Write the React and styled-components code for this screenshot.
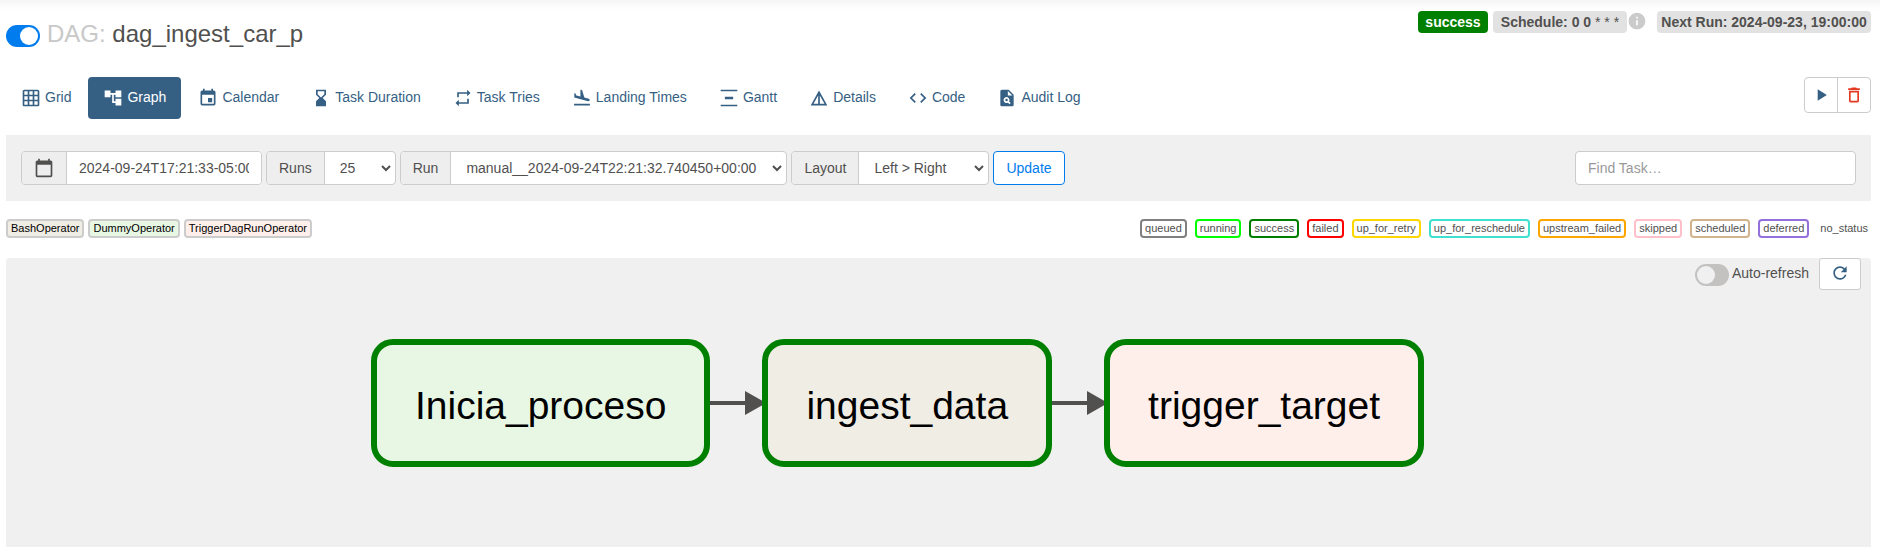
import React from 'react';
import styled, { createGlobalStyle } from 'styled-components';
import {
  MdGridOn, MdAccountTree, MdEvent, MdHourglassBottom, MdRepeat, MdFlightLand,
  MdVerticalDistribute, MdDetails, MdCode, MdPlagiarism, MdPlayArrow,
  MdDeleteOutline, MdCalendarToday, MdRefresh, MdInfo,
} from 'react-icons/md';

const c = {
  text: '#51504f',
  link: '#365f84',
  blue: '#017cee',
  border: '#cccccc',
  panel: '#f0f0f0',
  addon: '#eeeeee',
  muted: '#cbcbcb',
};

const Global = createGlobalStyle`
  *, *::before, *::after { box-sizing: border-box; }
  body {
    margin: 0;
    background: #fff;
    color: ${c.text};
    font: 14px/20px "Liberation Sans", Arial, sans-serif;
  }
  button, input, select { font: inherit; color: inherit; margin: 0; }
`;

const Page = styled.div`
  display: flex;
  flex-direction: column;
  min-height: 100vh;
  padding: 0 9px 0 6px;
  background: linear-gradient(#f5f5f5, #fff 10px);
`;

const Header = styled.header`
  display: flex;
  justify-content: space-between;
  align-items: flex-start;
  padding: 11px 0 24px;
`;

const TitleRow = styled.div`
  display: flex;
  align-items: center;
  gap: 7px;
  padding-top: 8px;
`;

const Title = styled.h1`
  margin: 0;
  font-size: 24px;
  line-height: 30px;
  font-weight: 400;
  padding-bottom: 4px;
`;

const Muted = styled.span`
  color: #c8c8c8;
`;

const Switch = styled.input.attrs({ type: 'checkbox', role: 'switch' })`
  appearance: none;
  display: flex;
  flex: none;
  width: 34px;
  height: 22px;
  padding: 2px;
  border-radius: 11px;
  background: #c4c2c1;
  &::before {
    content: '';
    width: 18px;
    height: 18px;
    border-radius: 50%;
    background: #f0f0f0;
  }
  &:checked { background: ${c.blue}; justify-content: flex-end; }
  &:checked::before { background: #fff; }
`;

const Labels = styled.div`
  display: flex;
  align-items: flex-start;
  gap: 5px;
`;

const Label = styled.span`
  min-width: ${(p) => p.$width}px;
  padding: 0 4px;
  border-radius: 4px;
  background: ${(p) => (p.$success ? '#008000' : '#e2e2e2')};
  color: ${(p) => (p.$success ? '#fff' : c.text)};
  font-weight: 700;
  line-height: 22px;
  text-align: center;
`;

const Wildcards = styled.span`
  font-weight: 400;
`;

const Schedule = styled.span`
  display: flex;
  margin-right: 5px;
  color: ${c.muted};
`;

const NavRow = styled.div`
  display: flex;
  justify-content: space-between;
  align-items: flex-start;
  padding-bottom: 16px;
`;

const Tabs = styled.nav`
  display: flex;
  gap: 2px;
`;

const Tab = styled.a`
  display: flex;
  align-items: center;
  gap: 4px;
  height: 42px;
  padding: 0 15px;
  border-radius: 4px;
  text-decoration: none;
  color: ${(p) => (p.$active ? '#fff' : c.link)};
  background: ${(p) => (p.$active ? c.link : 'transparent')};
`;

const TabText = styled.span`
  padding-bottom: 2px;
`;

const ButtonGroup = styled.div`
  display: flex;
  border: 1px solid ${c.border};
  border-radius: 4px;
  background: #fff;
`;

const IconButton = styled.button`
  display: flex;
  align-items: center;
  justify-content: center;
  width: ${(p) => (p.$last ? 33 : 32)}px;
  height: 34px;
  padding: 0;
  border: 0;
  border-left: ${(p) => (p.$last ? `1px solid ${c.border}` : '0')};
  background: none;
  color: ${(p) => p.$color};
`;

const FilterBar = styled.form`
  display: flex;
  justify-content: space-between;
  align-items: center;
  padding: 16px 15px;
  background: ${c.panel};
`;

const Filters = styled.div`
  display: flex;
  gap: 4px;
`;

const Group = styled.div`
  display: flex;
  height: 34px;
  border: 1px solid ${c.border};
  border-radius: 4px;
  background: #fff;
  overflow: hidden;
`;

const Addon = styled.label`
  display: flex;
  align-items: center;
  padding: 0 12px;
  border-right: 1px solid ${c.border};
  background: ${c.addon};
`;

const DateInput = styled.input`
  width: 194px;
  padding: 0 12px;
  border: 0;
  background: #fff;
`;

const SelectBox = styled.div`
  display: grid;
  align-items: center;
  & > * { grid-area: 1 / 1; }
`;

const Select = styled.select`
  appearance: none;
  width: ${(p) => p.$width}px;
  height: 32px;
  padding: 0 15px;
  border: 0;
  background: transparent;
`;

const Chevron = styled.svg`
  justify-self: end;
  margin-right: 4px;
  pointer-events: none;
`;

const Update = styled.button`
  height: 34px;
  padding: 0 12px;
  border: 1px solid ${c.blue};
  border-radius: 4px;
  background: #fff;
  color: ${c.blue};
`;

const Search = styled.input`
  width: 281px;
  height: 34px;
  padding: 0 12px;
  border: 1px solid ${c.border};
  border-radius: 4px;
  background: #fff;
  &::placeholder { color: #999; opacity: 1; }
`;

const Legend = styled.div`
  display: flex;
  justify-content: space-between;
  padding: 18px 0 20px;
`;

const Tags = styled.div`
  display: flex;
  gap: ${(p) => p.$gap}px;
`;

const Tag = styled.span`
  padding: 0 3px;
  border: solid ${(p) => p.$border || 'transparent'};
  border-width: ${(p) => (p.$border ? '2px' : '2px 0')};
  border-radius: 4px;
  background: ${(p) => p.$fill || '#fff'};
  color: ${(p) => (p.$fill ? '#000' : c.text)};
  font-size: 11px;
  line-height: 15px;
`;

const GraphPanel = styled.main`
  flex: 1;
  min-height: 280px;
  border-radius: 4px 4px 0 0;
  background: ${c.panel};
`;

const RefreshRow = styled.div`
  display: flex;
  justify-content: flex-end;
  align-items: flex-start;
  gap: 10px;
  padding-right: 10px;
`;

const AutoRefresh = styled.label`
  display: flex;
  gap: 3px;
  padding-top: 6px;
  line-height: 18px;
`;

const RefreshButton = styled.button`
  display: flex;
  align-items: center;
  justify-content: center;
  width: 42px;
  height: 32px;
  padding: 0 0 2px;
  border: 1px solid ${c.border};
  border-radius: 3px;
  background: #fff;
  color: ${c.link};
`;

const Flow = styled.div`
  display: flex;
  justify-content: center;
  align-items: center;
  padding: 49px 82px 48px 0;
`;

const Node = styled.div`
  padding: 39px 38px 33px;
  border: 6px solid #008000;
  border-radius: 22px;
  background: ${(p) => p.$fill};
  color: #000;
  font-size: 39px;
  line-height: 44px;
`;

const Edge = styled.svg`
  flex: none;
  margin-right: -4px;
`;

const TABS = [
  ['Grid', MdGridOn],
  ['Graph', MdAccountTree],
  ['Calendar', MdEvent],
  ['Task Duration', MdHourglassBottom],
  ['Task Tries', MdRepeat],
  ['Landing Times', MdFlightLand],
  ['Gantt', MdVerticalDistribute],
  ['Details', MdDetails],
  ['Code', MdCode],
  ['Audit Log', MdPlagiarism],
];

const OPERATORS = [
  ['BashOperator', '#f0ede4'],
  ['DummyOperator', '#e8f7e4'],
  ['TriggerDagRunOperator', '#ffefeb'],
];

const STATES = [
  ['queued', 'gray'],
  ['running', 'lime'],
  ['success', 'green'],
  ['failed', 'red'],
  ['up_for_retry', 'gold'],
  ['up_for_reschedule', 'turquoise'],
  ['upstream_failed', 'orange'],
  ['skipped', 'pink'],
  ['scheduled', 'tan'],
  ['deferred', 'mediumpurple'],
  ['no_status', null],
];

const TASKS = [
  ['Inicia_proceso', '#e8f7e4'],
  ['ingest_data', '#f0ede4'],
  ['trigger_target', '#ffefeb'],
];

function Dropdown({ id, label, value, width }) {
  return (
    <Group>
      <Addon htmlFor={id}>{label}</Addon>
      <SelectBox>
        <Select id={id} $width={width} defaultValue={value}>
          <option>{value}</option>
        </Select>
        <Chevron width="10" height="8" viewBox="0 0 10 8" aria-hidden="true">
          <path d="M1 2l4 4 4-4" fill="none" stroke={c.text} strokeWidth="2" />
        </Chevron>
      </SelectBox>
    </Group>
  );
}

function Arrow() {
  return (
    <Edge width="56" height="26" viewBox="0 0 56 26" aria-hidden="true">
      <path d="M0 13H38" stroke={c.text} strokeWidth="4" />
      <path d="M35 1L56 13L35 25Z" fill={c.text} />
    </Edge>
  );
}

export default function App() {
  return (
    <Page>
      <Global />
      <Header>
        <TitleRow>
          <Switch aria-label="Pause/Unpause DAG" defaultChecked />
          <Title><Muted>DAG:</Muted> dag_ingest_car_p</Title>
        </TitleRow>
        <Labels>
          <Label $success $width={70}>success</Label>
          <Schedule>
            <Label $width={134}>Schedule: 0 0 <Wildcards>* * *</Wildcards></Label>
            <MdInfo size={20} />
          </Schedule>
          <Label $width={214}>Next Run: 2024-09-23, 19:00:00</Label>
        </Labels>
      </Header>

      <NavRow>
        <Tabs>
          {TABS.map(([name, Icon]) => (
            <Tab key={name} href="#" $active={name === 'Graph'}>
              <Icon size={20} />
              <TabText>{name}</TabText>
            </Tab>
          ))}
        </Tabs>
        <ButtonGroup>
          <IconButton type="button" aria-label="Trigger DAG" $color={c.link}>
            <MdPlayArrow size={20} />
          </IconButton>
          <IconButton type="button" aria-label="Delete DAG" $color="#e43921" $last>
            <MdDeleteOutline size={20} />
          </IconButton>
        </ButtonGroup>
      </NavRow>

      <FilterBar onSubmit={(e) => e.preventDefault()}>
        <Filters>
          <Group>
            <Addon htmlFor="base_date" aria-label="Base date"><MdCalendarToday size={20} /></Addon>
            <DateInput id="base_date" defaultValue="2024-09-24T17:21:33-05:00" />
          </Group>
          <Dropdown id="runs" label="Runs" value="25" width={70} />
          <Dropdown id="run" label="Run" value="manual__2024-09-24T22:21:32.740450+00:00" width={335} />
          <Dropdown id="layout" label="Layout" value="Left > Right" width={129} />
          <Update type="submit">Update</Update>
        </Filters>
        <Search aria-label="Find task" placeholder="Find Task…" />
      </FilterBar>

      <Legend>
        <Tags $gap={4}>
          {OPERATORS.map(([name, fill]) => (
            <Tag key={name} $border={c.border} $fill={fill}>{name}</Tag>
          ))}
        </Tags>
        <Tags $gap={8}>
          {STATES.map(([name, color]) => (
            <Tag key={name} $border={color}>{name}</Tag>
          ))}
        </Tags>
      </Legend>

      <GraphPanel>
        <RefreshRow>
          <AutoRefresh>
            <Switch />
            Auto-refresh
          </AutoRefresh>
          <RefreshButton type="button" aria-label="Refresh"><MdRefresh size={20} /></RefreshButton>
        </RefreshRow>
        <Flow>
          {TASKS.map(([name, fill], i) => (
            <React.Fragment key={name}>
              {i > 0 && <Arrow />}
              <Node $fill={fill}>{name}</Node>
            </React.Fragment>
          ))}
        </Flow>
      </GraphPanel>
    </Page>
  );
}
